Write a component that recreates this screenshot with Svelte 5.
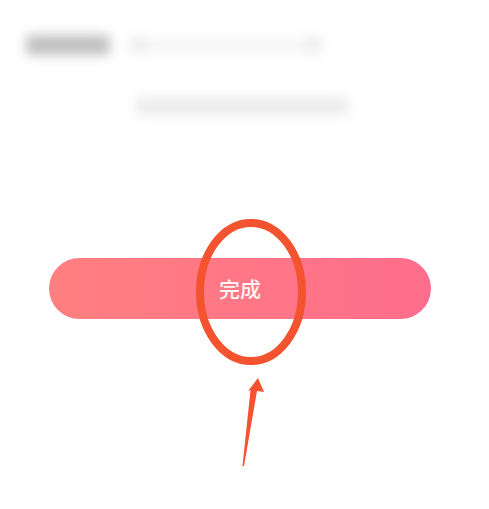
<script>
    let label = "完成";
</script>

<main class="page">
    <div class="top-row">
        <div class="blur name"></div>
        <div class="blur hint">
            <span class="dot"></span>
            <span class="dot"></span>
        </div>
    </div>
    <div class="blur sub"></div>
    <button class="done">{label}</button>

    <!-- red annotation drawn over the screenshot -->
    <svg class="marks" width="489" height="509" viewBox="0 0 489 509">
        <ellipse cx="251" cy="292" rx="51" ry="69" fill="none" stroke="#f4532f" stroke-width="8" />
        <path d="M258 378 L264 392 L257 391 L244 466 L242.5 466 L250.5 390 L248 391 Z" fill="#f4532f" />
    </svg>
</main>

<style>
    :global(body) {
        margin: 0;
        background: #fff;
    }

    .page {
        position: relative;
        width: 489px;
        height: 509px;
        overflow: hidden;
        background: #fff;
        padding-top: 35px;
        box-sizing: border-box;
    }

    .top-row {
        display: flex;
        align-items: center;
        gap: 20px;
        margin-left: 26px;
    }

    .blur {
        filter: blur(6px);
    }

    .name {
        width: 84px;
        height: 20px;
        background: #c0c0c0;
        border-radius: 4px;
    }

    .hint {
        display: flex;
        justify-content: space-between;
        align-items: center;
        width: 192px;
        height: 16px;
        background: #f7f7f7;
    }

    .dot {
        width: 16px;
        height: 16px;
        border-radius: 50%;
        background: #ebebeb;
    }

    .sub {
        width: 212px;
        height: 18px;
        margin: 42px 0 0 136px;
        background: #ececec;
    }

    .done {
        display: block;
        width: 382px;
        height: 61px;
        margin: 143px 0 0 49px;
        padding: 0 0 1px;
        border: none;
        border-radius: 31px;
        background: linear-gradient(90deg, #ff8080, #ff6d8c);
        color: #fff5f2;
        font-family: "Noto Sans CJK SC", "Liberation Sans", sans-serif;
        font-size: 21px;
        font-weight: 500;
        line-height: 1;
    }

    .marks {
        position: absolute;
        left: 0;
        top: 0;
        pointer-events: none;
    }
</style>
